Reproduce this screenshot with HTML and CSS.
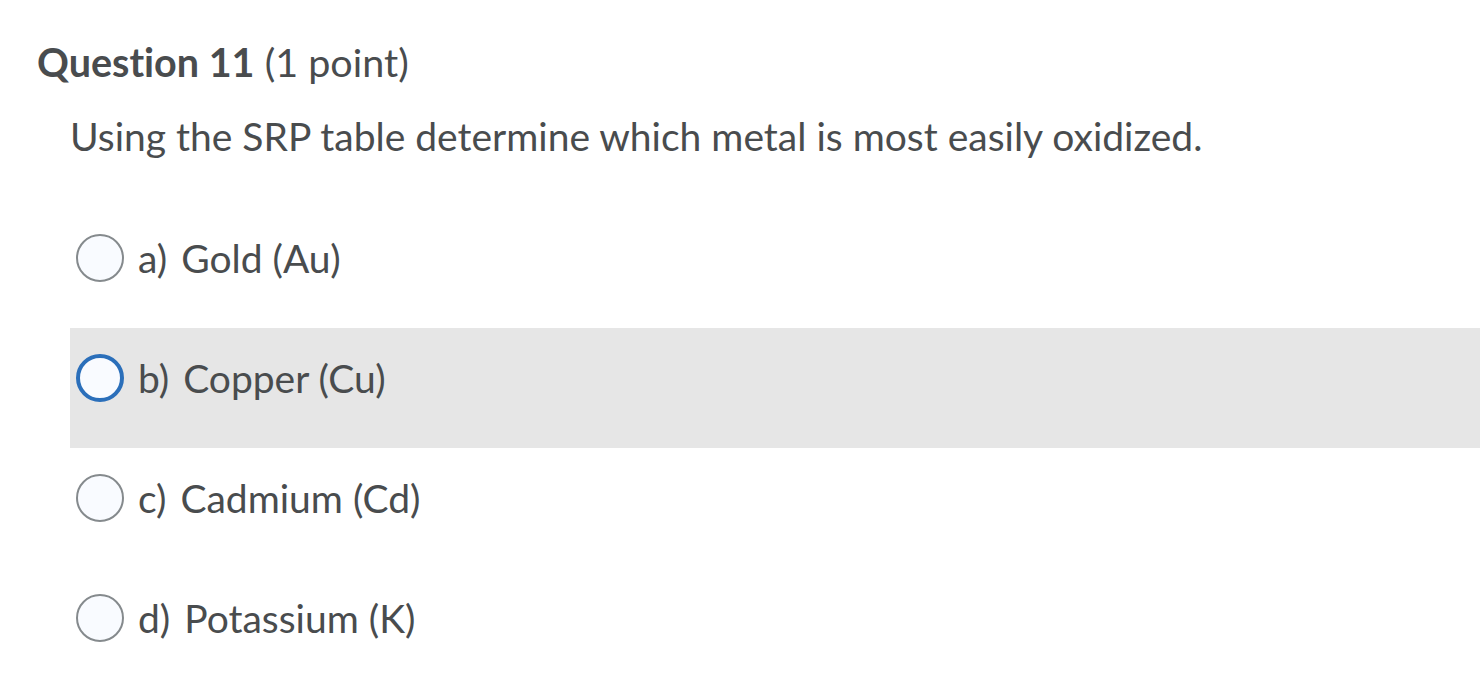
FILE: index.html
```html
<!DOCTYPE html>
<html>
<head>
<meta charset="utf-8">
<link rel="stylesheet" href="styles.css">
</head>
<body>
<div class="page">
  <h2 class="q-title"><strong>Question 11</strong> (1 point)</h2>
  <div class="q-body">
    <p class="q-text">Using the SRP table determine which metal is most easily oxidized.</p>
    <div class="options">
      <div class="option">
        <span class="radio"></span>
        <span class="label"><span class="letter">a)</span>Gold (Au)</span>
      </div>
      <div class="option hover">
        <span class="radio active"></span>
        <span class="label"><span class="letter">b)</span>Copper (Cu)</span>
      </div>
      <div class="option">
        <span class="radio"></span>
        <span class="label"><span class="letter">c)</span>Cadmium (Cd)</span>
      </div>
      <div class="option">
        <span class="radio"></span>
        <span class="label"><span class="letter">d)</span>Potassium (K)</span>
      </div>
    </div>
  </div>
</div>
</body>
</html>
```

FILE: styles.css
```css
html, body {
  margin: 0;
  padding: 0;
  background: #ffffff;
}
body {
  font-family: Lato, "Liberation Sans", sans-serif;
  color: #494c4e;
  overflow: hidden;
  font-variant-ligatures: none;
}
.page {
  padding: 38px 0 0 37px;
}
.q-title {
  margin: 0;
  font-size: 39.5px;
  font-weight: 400;
  line-height: 48px;
}
.q-title strong {
  font-weight: 700;
}
.q-body {
  padding-left: 33px;
}
.q-text {
  margin: 26px 0 0 0;
  font-size: 39px;
  line-height: 48px;
}
.options {
  margin-top: 48px;
}
.option {
  height: 120px;
  box-sizing: border-box;
  padding: 26px 0 0 6px;
  display: flex;
  align-items: flex-start;
}
.option.hover {
  background: #e6e6e6;
}
.radio {
  width: 48px;
  height: 48px;
  box-sizing: border-box;
  border-radius: 50%;
  border: 2px solid #858a8d;
  background: #f9fbff;
  flex: none;
}
.radio.active {
  border: 4px solid #2b6fba;
}
.label {
  margin-left: 14px;
  font-size: 39px;
  line-height: 48px;
}
.letter {
  margin-right: 14px;
}
```
